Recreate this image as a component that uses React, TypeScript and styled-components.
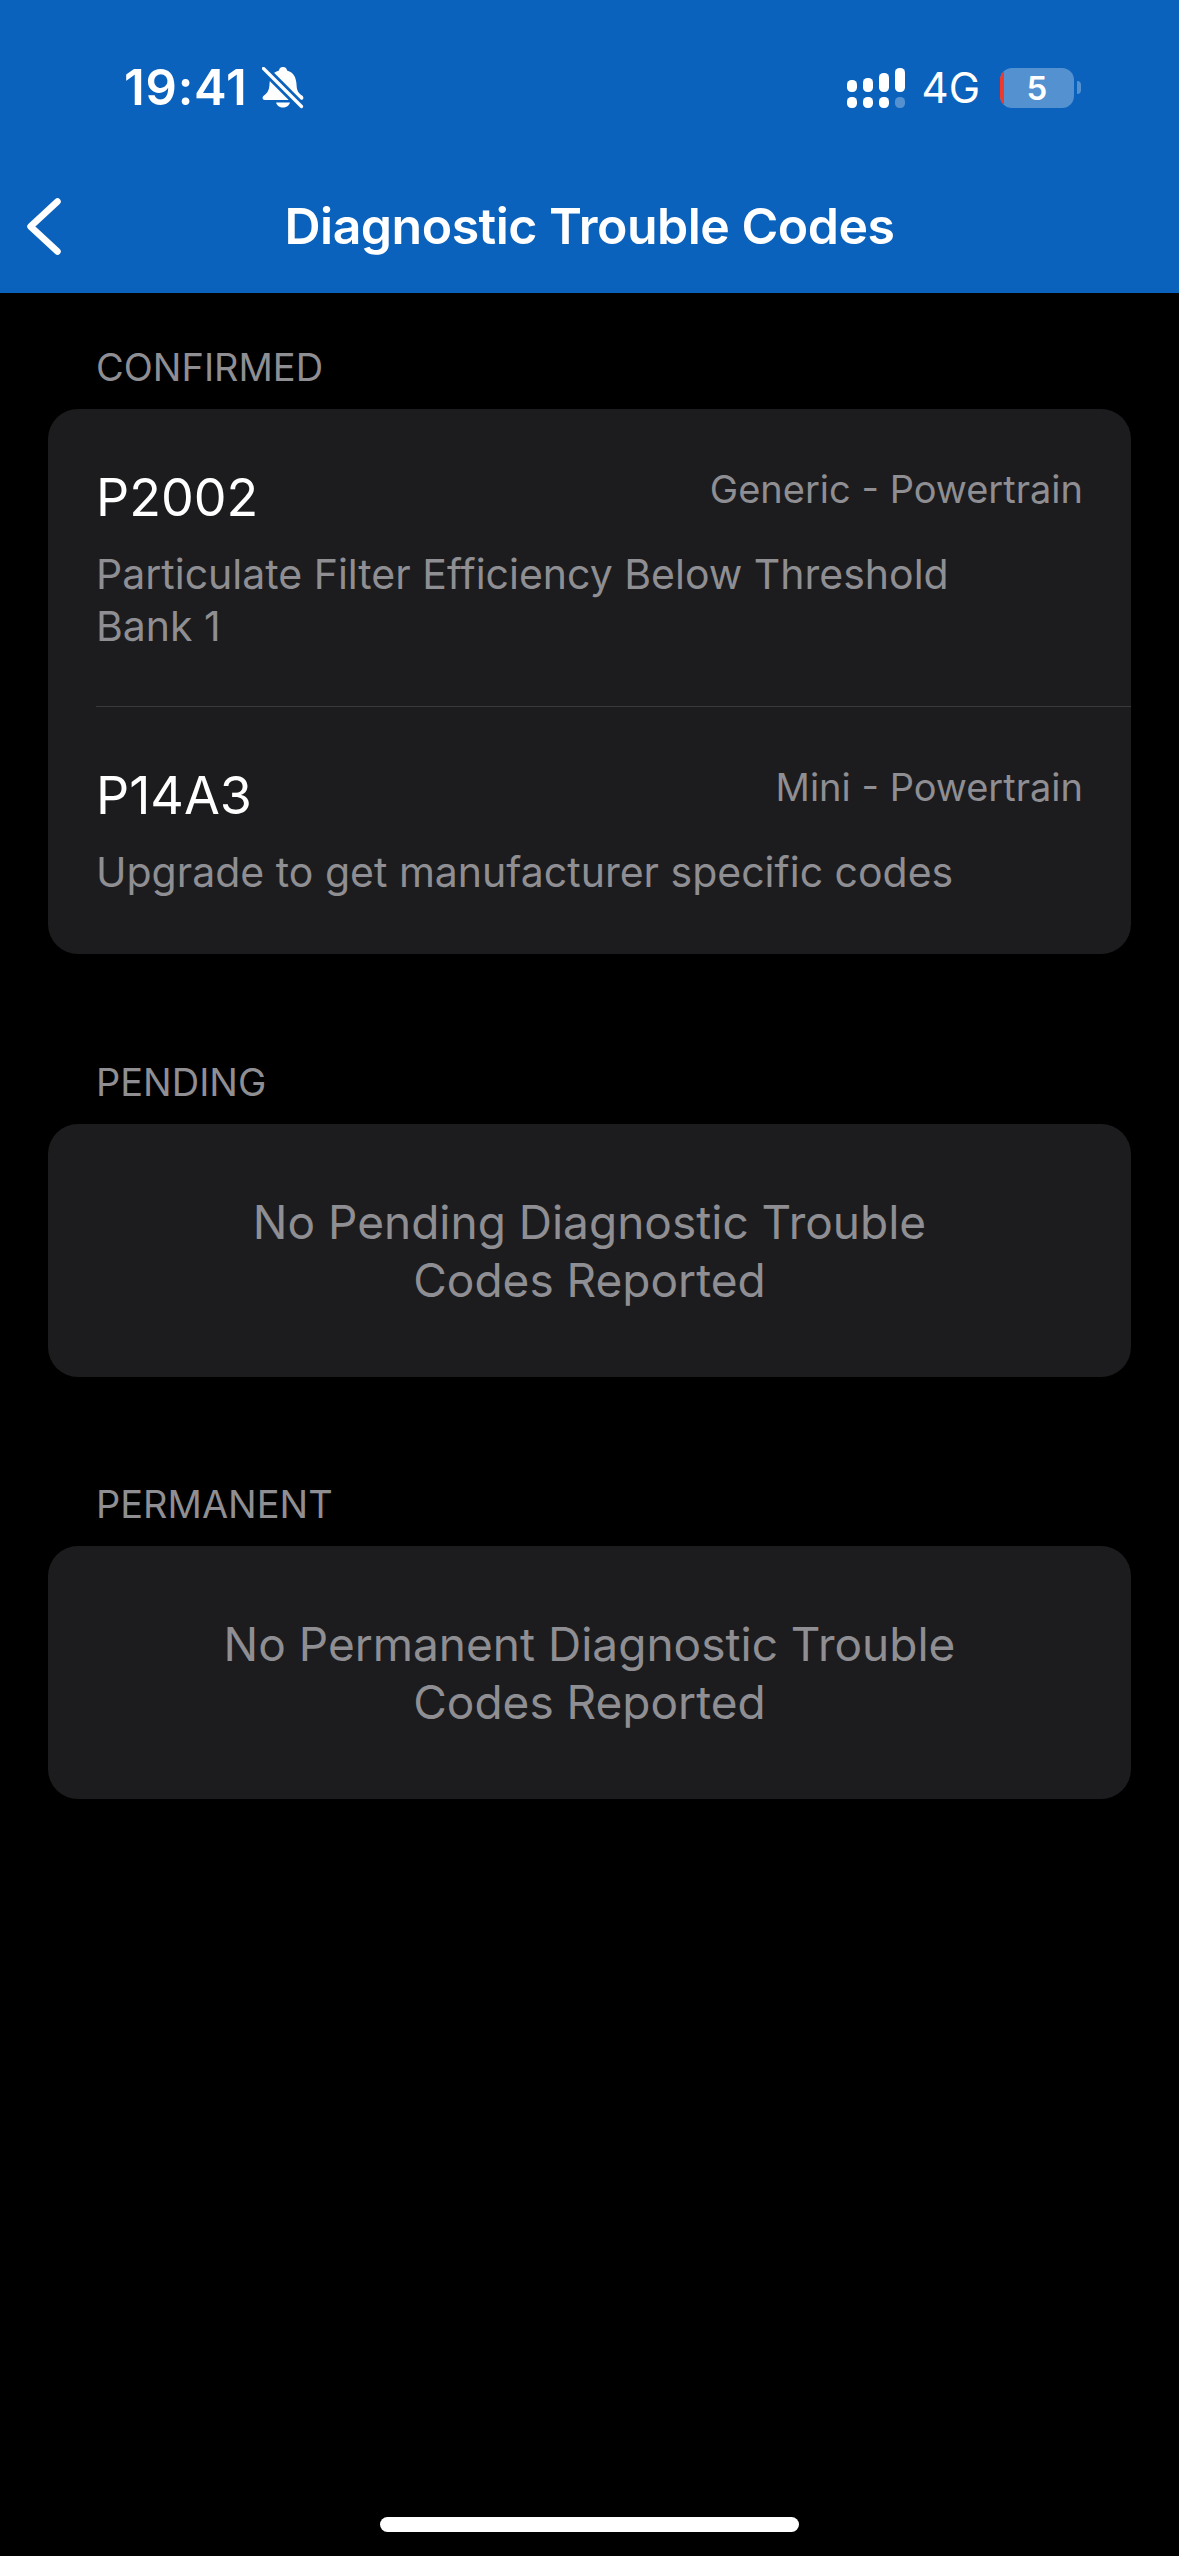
import React from 'react';
import styled, { createGlobalStyle } from 'styled-components';

const GlobalStyle = createGlobalStyle`
  html, body {
    margin: 0;
    padding: 0;
    background: #000;
  }
  * { box-sizing: border-box; }
`;

const HEADER_BLUE = '#0a62bd';

const Page = styled.div`
  width: 1179px;
  height: 2556px;
  display: flex;
  flex-direction: column;
  background: #000;
  font-family: Inter, "Liberation Sans", sans-serif;
  overflow: hidden;
`;

const Header = styled.header`
  height: 293px;
  flex: none;
  background: ${HEADER_BLUE};
  color: #fff;
  display: flex;
  flex-direction: column;
`;

const StatusBar = styled.div`
  height: 168px;
  padding: 7px 0 0 124px;
  display: flex;
  align-items: center;
`;

const Time = styled.span`
  font-size: 49px;
  font-weight: 600;
  letter-spacing: 0.8px;
  line-height: 1;
`;

const StatusRight = styled.div`
  margin-left: auto;
  display: flex;
  align-items: center;
  padding-right: 98px;
`;

const Network = styled.span`
  font-size: 42px;
  font-weight: 400;
  line-height: 1;
  margin-left: 17px;
`;

const Battery = styled.div`
  position: relative;
  width: 74px;
  height: 40px;
  margin-left: 20px;
  border-radius: 12px;
  background: rgba(255, 255, 255, 0.3);
  display: flex;
  align-items: center;
  justify-content: center;
  font-size: 33px;
  font-weight: 600;
  overflow: hidden;
  &::before {
    content: "";
    position: absolute;
    left: 0;
    top: 0;
    bottom: 0;
    width: 4px;
    background: #f0392b;
  }
`;

const BatteryCap = styled.div`
  width: 4px;
  height: 13px;
  margin-left: 3px;
  border-radius: 0 7px 7px 0;
  background: rgba(255, 255, 255, 0.3);
`;

const NavBar = styled.div`
  position: relative;
  flex: 1;
  display: flex;
  align-items: center;
  justify-content: center;
  padding-bottom: 10px;
`;

const BackButton = styled.button`
  position: absolute;
  left: 27px;
  top: 30px;
  padding: 0;
  border: 0;
  background: none;
  display: flex;
`;

const Title = styled.h1`
  margin: 0;
  font-size: 50px;
  font-weight: 600;
  letter-spacing: -0.5px;
  line-height: 1;
`;

const Content = styled.main`
  padding: 0 48px;
  display: flex;
  flex-direction: column;
  flex: 1;
`;

const Section = styled.section<{ $top: number }>`
  margin-top: ${(p) => p.$top}px;
`;

const SectionLabel = styled.h2`
  margin: 0 0 20px;
  padding-left: 48px;
  height: 96px;
  display: flex;
  align-items: flex-end;
  font-size: 38px;
  font-weight: 400;
  line-height: 44px;
  color: #8e8e93;
`;

const Card = styled.div`
  background: #1c1c1e;
  border-radius: 30px;
  overflow: hidden;
`;

const CodeRow = styled.div<{ $height: number; $divider?: boolean }>`
  height: ${(p) => p.$height}px;
  margin-left: 48px;
  padding: 59px 48px 0 0;
  border-bottom: ${(p) => (p.$divider ? '1px solid #3a3a3c' : 'none')};
`;

const CodeHead = styled.div`
  display: flex;
  justify-content: space-between;
  align-items: flex-start;
`;

const Code = styled.span`
  font-size: 52px;
  font-weight: 400;
  line-height: 60px;
  color: #fff;
`;

const Category = styled.span`
  font-size: 38px;
  line-height: 44px;
  margin-top: -1px;
  color: #8e8e93;
`;

const Description = styled.p`
  margin: 20px 0 0;
  width: 900px;
  font-size: 41px;
  line-height: 52px;
  color: #8e8e93;
`;

const EmptyMessage = styled.div`
  height: 253px;
  display: flex;
  align-items: center;
  justify-content: center;
  text-align: center;
  font-size: 46px;
  line-height: 58px;
  color: #8e8e93;
`;

const Spacer = styled.div`
  flex: 1;
`;

const HomeBar = styled.div`
  width: 419px;
  height: 15px;
  margin: 0 auto 24px;
  border-radius: 8px;
  background: #fff;
`;

const BellIcon = styled.svg`
  margin-left: 14px;
`;

const BellOff = () => (
  <BellIcon width="42" height="42" viewBox="0 0 42 42">
    <path
      fill="#fff"
      d="M21 0c-2.500 0-4 1.700-4 3.500C10 5.500 8 11 7.500 17c-.3 5-1 8-5.500 11.500C0 30 0 33 3 33h36c3 0 3-3 1-4.500-5-3.500-5.200-6.500-5.500-11.500C34 11 32 5.500 25 3.500 25 1.700 23.500 0 21 0ZM14 35.500h14c-.8 3-3.800 5-7 5s-6.200-2-7-5Z"
    />
    <path d="M-1 -1 41 41" stroke={HEADER_BLUE} strokeWidth="9" />
    <path d="M1.500 1.500 39.500 39.500" stroke="#fff" strokeWidth="3.200" strokeLinecap="round" />
  </BellIcon>
);

const SignalDots = () => (
  <svg width="58" height="40" viewBox="0 0 58 40" fill="#fff">
    <rect x="0" y="12" width="10" height="12" rx="4.500" />
    <rect x="16" y="10" width="10" height="14" rx="4.500" />
    <rect x="32" y="5" width="10" height="19" rx="4.500" />
    <rect x="48" y="0" width="10" height="24" rx="4.500" />
    <rect x="0" y="29" width="10" height="11" rx="4.500" />
    <rect x="16" y="29" width="10" height="11" rx="4.500" />
    <rect x="32" y="29" width="10" height="11" rx="4.500" />
    <rect x="48" y="29" width="10" height="11" rx="4.500" opacity="0.3" />
  </svg>
);

const ChevronBack = () => (
  <svg width="34" height="57" viewBox="0 0 34 57" fill="none">
    <path d="M30.500 3.500 3.500 28.500l27 25" stroke="#fff" strokeWidth="6.500" strokeLinecap="round" strokeLinejoin="round" />
  </svg>
);

export default function App() {
  return (
    <Page>
      <GlobalStyle />
      <Header>
        <StatusBar>
          <Time>19:41</Time>
          <BellOff />
          <StatusRight>
            <SignalDots />
            <Network>4G</Network>
            <Battery>5</Battery>
            <BatteryCap />
          </StatusRight>
        </StatusBar>
        <NavBar>
          <BackButton aria-label="Back">
            <ChevronBack />
          </BackButton>
          <Title>Diagnostic Trouble Codes</Title>
        </NavBar>
      </Header>
      <Content>
        <Section $top={0}>
          <SectionLabel>CONFIRMED</SectionLabel>
          <Card>
            <CodeRow $height={298} $divider>
              <CodeHead>
                <Code>P2002</Code>
                <Category>Generic - Powertrain</Category>
              </CodeHead>
              <Description>Particulate Filter Efficiency Below Threshold Bank 1</Description>
            </CodeRow>
            <CodeRow $height={247}>
              <CodeHead>
                <Code>P14A3</Code>
                <Category>Mini - Powertrain</Category>
              </CodeHead>
              <Description>Upgrade to get manufacturer specific codes</Description>
            </CodeRow>
          </Card>
        </Section>
        <Section $top={54}>
          <SectionLabel>PENDING</SectionLabel>
          <Card>
            <EmptyMessage>
              No Pending Diagnostic Trouble
              <br />
              Codes Reported
            </EmptyMessage>
          </Card>
        </Section>
        <Section $top={53}>
          <SectionLabel>PERMANENT</SectionLabel>
          <Card>
            <EmptyMessage>
              No Permanent Diagnostic Trouble
              <br />
              Codes Reported
            </EmptyMessage>
          </Card>
        </Section>
        <Spacer />
      </Content>
      <HomeBar />
    </Page>
  );
}
